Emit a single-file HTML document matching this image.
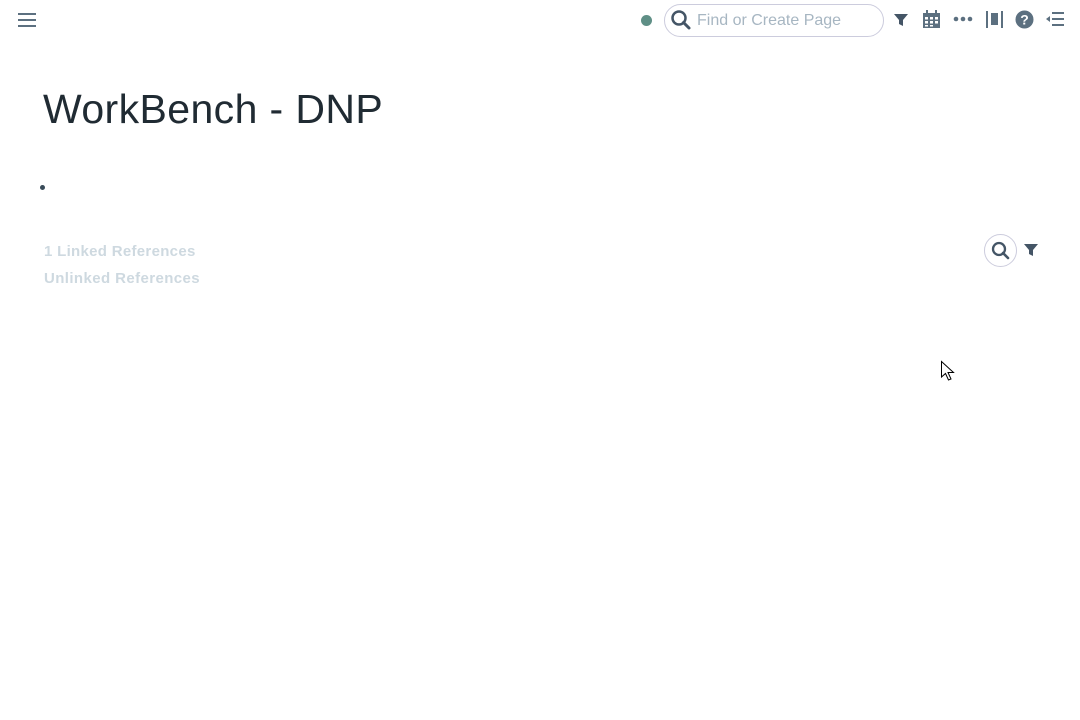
<!DOCTYPE html>
<html><head><meta charset="utf-8"><style>
body{margin:0;width:1080px;height:720px;background:#fff;font-family:"Liberation Sans",sans-serif;position:relative;overflow:hidden}
.a{position:absolute}
</style></head><body>
<svg class="a" style="left:17px;top:12px" width="20" height="16"><g stroke="#5c7080" stroke-width="2"><line x1="1" y1="2" x2="19" y2="2"/><line x1="1" y1="8" x2="19" y2="8"/><line x1="1" y1="14" x2="19" y2="14"/></g></svg>
<div class="a" style="left:641px;top:15px;width:11px;height:11px;border-radius:50%;background:#5f8f86"></div>
<div class="a" style="left:664px;top:4px;width:220px;height:33px;border:1px solid #ccd;border-radius:17px;box-sizing:border-box"></div>
<svg class="a" style="left:670px;top:9px" width="22" height="22"><circle cx="9" cy="9" r="6.5" fill="none" stroke="#445566" stroke-width="2.5"/><line x1="13.5" y1="13.5" x2="19" y2="19" stroke="#445566" stroke-width="3" stroke-linecap="round"/></svg>
<div class="a" style="left:697px;top:12px;font-size:16px;color:#a7b6c2">Find or Create Page</div>
<svg class="a" style="left:893px;top:12px" width="16" height="16"><path d="M1 2H15L10 8V14L6 12V8Z" fill="#445566"/></svg>
<svg class="a" style="left:922px;top:10px" width="19" height="19"><rect x="1" y="3" width="17" height="15" fill="#5c7080"/><g fill="#fff"><rect x="3" y="7" width="3" height="2.5"/><rect x="8" y="7" width="3" height="2.5"/><rect x="13" y="7" width="3" height="2.5"/><rect x="3" y="11" width="3" height="2.5"/><rect x="8" y="11" width="3" height="2.5"/><rect x="13" y="11" width="3" height="2.5"/><rect x="3" y="15" width="3" height="1.5"/><rect x="8" y="15" width="3" height="1.5"/></g><rect x="4" y="0" width="2" height="4" fill="#5c7080"/><rect x="13" y="0" width="2" height="4" fill="#5c7080"/></svg>
<svg class="a" style="left:953px;top:16px" width="20" height="6"><circle cx="3" cy="3" r="2.3" fill="#5c7080"/><circle cx="10" cy="3" r="2.3" fill="#5c7080"/><circle cx="17" cy="3" r="2.3" fill="#5c7080"/></svg>
<svg class="a" style="left:985px;top:10px" width="19" height="19"><rect x="1" y="1" width="2" height="17" fill="#5c7080"/><rect x="16" y="1" width="2" height="17" fill="#5c7080"/><rect x="6" y="3" width="7" height="12" fill="#5c7080"/></svg>
<svg class="a" style="left:1015px;top:10px" width="19" height="19"><circle cx="9.5" cy="9.5" r="9" fill="#5c7080"/><text x="9.5" y="14.5" font-size="14" font-weight="bold" fill="#fff" text-anchor="middle" font-family="Liberation Sans">?</text></svg>
<svg class="a" style="left:1045px;top:11px" width="20" height="18"><path d="M1 8L5 5V11Z" fill="#5c7080"/><g stroke="#5c7080" stroke-width="2"><line x1="7" y1="2" x2="19" y2="2"/><line x1="7" y1="8" x2="19" y2="8"/><line x1="7" y1="14" x2="19" y2="14"/></g></svg>
<div class="a" style="left:43px;top:86px;font-size:41px;color:#202b33;letter-spacing:0.4px">WorkBench - DNP</div>
<div class="a" style="left:40px;top:185px;width:5px;height:5px;border-radius:50%;background:#394b59"></div>
<div class="a" style="left:44px;top:243px;font-size:15px;font-weight:bold;color:#ced9e0;letter-spacing:0.3px">1 Linked References</div>
<div class="a" style="left:44px;top:270px;font-size:15px;font-weight:bold;color:#ced9e0;letter-spacing:0.4px">Unlinked References</div>
<div class="a" style="left:984px;top:234px;width:33px;height:33px;border:1px solid #ccd;border-radius:50%;box-sizing:border-box"></div>
<svg class="a" style="left:990px;top:240px" width="20" height="20"><circle cx="9" cy="9" r="6" fill="none" stroke="#445566" stroke-width="2.3"/><line x1="13" y1="13" x2="18" y2="18" stroke="#445566" stroke-width="2.6" stroke-linecap="round"/></svg>
<svg class="a" style="left:1023px;top:243px" width="16" height="15"><path d="M1 1H15L10 7V13L6 11V7Z" fill="#445566"/></svg>
<svg class="a" style="left:940px;top:360px" width="16" height="22"><path d="M1.5 1.5V17L5.5 13.5L8.5 20L11 19L8 12.5H13.5Z" fill="#fff" stroke="#000" stroke-width="1"/></svg>
</body></html>
